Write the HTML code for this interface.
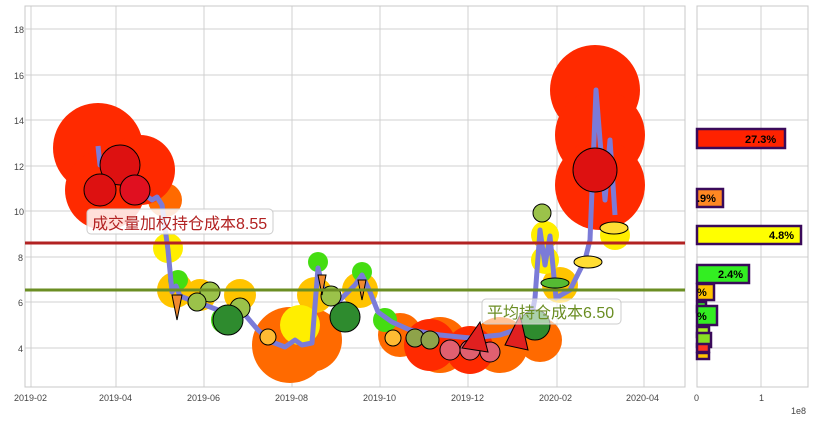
<!DOCTYPE html>
<html><head><meta charset="utf-8"><style>
body{margin:0;background:#fff;}
svg{display:block;font-family:"Liberation Sans","Noto Sans CJK SC",sans-serif;}
</style></head><body>
<svg width="813" height="422" viewBox="0 0 813 422" xmlns="http://www.w3.org/2000/svg">
<rect width="813" height="422" fill="#fff"/>
<g stroke="#d0d0d0" stroke-width="1">
<line x1="31" y1="6" x2="31" y2="387"/><line x1="116" y1="6" x2="116" y2="387"/><line x1="204" y1="6" x2="204" y2="387"/><line x1="292" y1="6" x2="292" y2="387"/><line x1="380" y1="6" x2="380" y2="387"/><line x1="468" y1="6" x2="468" y2="387"/><line x1="557" y1="6" x2="557" y2="387"/><line x1="644" y1="6" x2="644" y2="387"/>
<line x1="25" y1="29" x2="685" y2="29"/><line x1="25" y1="75" x2="685" y2="75"/><line x1="25" y1="120" x2="685" y2="120"/><line x1="25" y1="166" x2="685" y2="166"/><line x1="25" y1="211" x2="685" y2="211"/><line x1="25" y1="257" x2="685" y2="257"/><line x1="25" y1="302" x2="685" y2="302"/><line x1="25" y1="348" x2="685" y2="348"/>
<line x1="761" y1="6" x2="761" y2="387"/>
<line x1="697" y1="29" x2="808" y2="29"/><line x1="697" y1="75" x2="808" y2="75"/><line x1="697" y1="120" x2="808" y2="120"/><line x1="697" y1="166" x2="808" y2="166"/><line x1="697" y1="211" x2="808" y2="211"/><line x1="697" y1="257" x2="808" y2="257"/><line x1="697" y1="302" x2="808" y2="302"/><line x1="697" y1="348" x2="808" y2="348"/>
</g>
<rect x="25" y="6" width="660" height="381" fill="none" stroke="#c8c8c8"/>
<rect x="697" y="6" width="111" height="381" fill="none" stroke="#c8c8c8"/>
<g fill="#ff6a00"><circle cx="165" cy="200" r="17"/><circle cx="290" cy="345" r="38"/><circle cx="310" cy="340" r="32"/><circle cx="400" cy="335" r="22"/><circle cx="440" cy="345" r="28"/><circle cx="500" cy="345" r="28"/><circle cx="540" cy="340" r="22"/></g>
<g fill="#ffc400"><circle cx="175" cy="290" r="18"/><circle cx="200" cy="295" r="16"/><circle cx="240" cy="295" r="16"/><circle cx="315" cy="295" r="18"/><circle cx="360" cy="290" r="18"/><circle cx="560" cy="285" r="18"/></g>
<g fill="#ffee00"><circle cx="168" cy="248" r="15"/><circle cx="545" cy="235" r="14"/><circle cx="545" cy="260" r="14"/><circle cx="615" cy="235" r="15"/><circle cx="300" cy="325" r="20"/></g>
<g fill="#44dd11"><circle cx="178" cy="280" r="10"/><circle cx="318" cy="262" r="10"/><circle cx="362" cy="272" r="10"/><circle cx="225" cy="320" r="14"/><circle cx="385" cy="320" r="12"/></g>
<g fill="#ff2a00"><circle cx="98" cy="148" r="45"/><circle cx="105" cy="190" r="40"/><circle cx="140" cy="170" r="35"/><circle cx="595" cy="90" r="45"/><circle cx="600" cy="135" r="45"/><circle cx="600" cy="185" r="45"/><circle cx="430" cy="345" r="26"/><circle cx="470" cy="350" r="24"/></g>
<polyline fill="none" stroke="#7b7bd8" stroke-width="5" stroke-linejoin="round" points="98,146 100,165 120,170 145,195 152,200 157,197 162,205 168,250 172,292 176,286 180,296 190,300 205,305 218,310 232,316 240,302 246,316 258,330 272,342 285,347 295,340 302,345 312,343 318,268 324,292 340,300 355,285 362,275 370,292 378,312 392,322 410,330 440,335 470,338 500,335 530,325 535,298 540,230 545,265 550,236 556,298 570,290 585,260 590,240 596,90 600,140 605,200 610,140 615,215"/>
<g stroke="#000" stroke-width="1">
<circle cx="120" cy="165" r="20" fill="#dd1111"/><circle cx="100" cy="190" r="16" fill="#dd1111"/><circle cx="135" cy="190" r="15" fill="#e01020"/>
<circle cx="595" cy="170" r="22" fill="#dd1111"/>
<circle cx="542" cy="213" r="9" fill="#9bc24a"/><circle cx="210" cy="292" r="10" fill="#9bc24a"/><circle cx="197" cy="302" r="9" fill="#9bc24a"/><circle cx="240" cy="308" r="10" fill="#9bc24a"/><circle cx="331" cy="296" r="10" fill="#9bc24a"/>
<circle cx="228" cy="320" r="15" fill="#2e8b2e"/><circle cx="345" cy="317" r="15" fill="#2e8b2e"/><circle cx="535" cy="325" r="15" fill="#2e8b2e"/>
<ellipse cx="614" cy="228" rx="14" ry="6" fill="#ffdd33"/><ellipse cx="588" cy="262" rx="14" ry="6" fill="#ffdd33"/><ellipse cx="555" cy="283" rx="14" ry="5" fill="#55bb33"/>
<circle cx="268" cy="337" r="8" fill="#ffbb33"/><circle cx="393" cy="338" r="8" fill="#ffbb33"/>
<circle cx="415" cy="338" r="9" fill="#8ea34a"/><circle cx="430" cy="340" r="9" fill="#8ea34a"/>
<circle cx="450" cy="350" r="10" fill="#e06070"/><circle cx="470" cy="350" r="10" fill="#e06070"/><circle cx="490" cy="352" r="10" fill="#e06070"/>
<path d="M462,348 L480,322 L488,352 Z" fill="#e02020"/><path d="M505,345 L520,315 L528,350 Z" fill="#e02020"/>
<path d="M172,295 l5,25 l5,-25 Z" fill="#f08a30"/><path d="M318,275 l4,20 l4,-20 Z" fill="#f08a30"/><path d="M358,280 l4,20 l4,-20 Z" fill="#f08a30"/>
</g>
<line x1="25" y1="243" x2="685" y2="243" stroke="#b22222" stroke-width="3"/>
<line x1="25" y1="290" x2="685" y2="290" stroke="#6b8e23" stroke-width="3"/>
<rect x="87" y="209" width="186" height="25" rx="4" fill="#fff" fill-opacity="0.85" stroke="#ccc"/>
<text x="92" y="229" font-size="16" fill="#b22222">成交量加权持仓成本8.55</text>
<rect x="482" y="299" width="139" height="25" rx="4" fill="#fff" fill-opacity="0.6" stroke="#ccc"/>
<text x="487" y="318" font-size="16" fill="#6b8e23">平均持仓成本6.50</text>
<g stroke="#3a0a5a" stroke-width="2.5">
<rect x="697" y="129" width="88" height="19" fill="#ff2200"/>
<rect x="697" y="189" width="26" height="18" fill="#ff8822"/>
<rect x="697" y="226" width="104" height="18" fill="#ffff00"/>
<rect x="697" y="265" width="52" height="18" fill="#33ee22"/>
<rect x="697" y="284" width="17" height="16" fill="#ffc400"/>
<rect x="697" y="302" width="9" height="10" fill="#33ee22"/>
<rect x="697" y="306" width="20" height="19" fill="#33ee22"/>
<rect x="697" y="327" width="12" height="10" fill="#aaee22"/>
<rect x="697" y="333" width="14" height="14" fill="#88dd22"/>
<rect x="697" y="344" width="12" height="8" fill="#ff3322"/>
<rect x="697" y="353" width="12" height="6" fill="#ffc400"/>
</g>
<g font-size="11" font-weight="bold" fill="#000">
<text x="745" y="143">27.3%</text><text x="697" y="202">.9%</text><text x="769" y="239">4.8%</text><text x="718" y="278">2.4%</text><text x="697" y="296">%</text><text x="697" y="320">%</text>
</g>
<g font-size="9" fill="#444">
<text x="14" y="33">18</text><text x="14" y="79">16</text><text x="14" y="124">14</text><text x="14" y="170">12</text><text x="14" y="215">10</text><text x="18" y="261">8</text><text x="18" y="306">6</text><text x="18" y="352">4</text>
<text x="14" y="401">2019-02</text><text x="99" y="401">2019-04</text><text x="187" y="401">2019-06</text><text x="275" y="401">2019-08</text><text x="363" y="401">2019-10</text><text x="451" y="401">2019-12</text><text x="539" y="401">2020-02</text><text x="626" y="401">2020-04</text>
<text x="694" y="401">0</text><text x="759" y="401">1</text><text x="791" y="414">1e8</text>
</g>
</svg>
</body></html>
